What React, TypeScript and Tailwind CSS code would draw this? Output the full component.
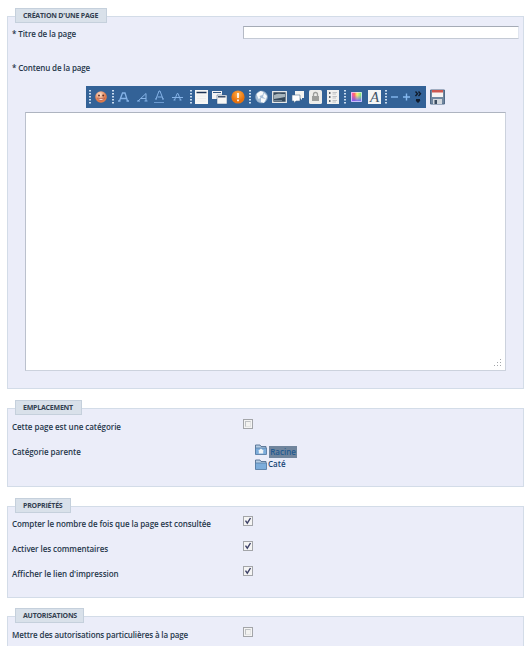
import React from "react";

type PanelProps = {
  title: string;
  titleClass: string;
  className: string;
  children: React.ReactNode;
};

function Panel({ title, titleClass, className, children }: PanelProps) {
  return (
    <section className={`w-[517px] border border-[#d3dce8] bg-[#ebedf9] ${className}`}>
      <h2
        className={`-mt-[9px] ml-[7px] flex h-[15px] items-center whitespace-nowrap border border-[#c5d0dc] bg-[#d9e1ea] pt-[1px] pl-[7px] text-[7px] font-bold tracking-[-0.22px] text-[#333f50] ${titleClass}`}
      >
        {title}
      </h2>
      {children}
    </section>
  );
}

function Check({ checked = false, label }: { checked?: boolean; label: string }) {
  return (
    <span
      role="checkbox"
      aria-checked={checked}
      aria-label={label}
      className="flex h-[10px] w-[10px] items-center justify-center border border-[#a3a5a9] bg-[#f4f4f4]"
    >
      {checked ? (
        <svg width="8" height="8" viewBox="0 0 8 8" fill="none" stroke="#3d4168" strokeWidth="1.4">
          <path d="M1.5 3.7 3.3 6.2 6.5 1" />
        </svg>
      ) : (
        <span className="h-[6px] w-[6px] border border-[#e3e4e4] border-t-[#bfc2c5] border-l-[#bfc2c5] bg-[#f3f3f1]" />
      )}
    </span>
  );
}

function Row({
  label,
  tracking,
  checked,
  className,
}: {
  label: string;
  tracking: string;
  checked?: boolean;
  className: string;
}) {
  return (
    <div className={`flex h-[12px] pl-[4px] ${className}`}>
      <span className={`w-[231px] whitespace-nowrap pt-[2px] leading-[12px] ${tracking}`}>{label}</span>
      <Check checked={checked} label={label} />
    </div>
  );
}

function Dots({ className }: { className: string }) {
  return (
    <svg className={`shrink-0 ${className}`} width="2" height="14" viewBox="0 0 2 14" fill="#c9dcef">
      {[0, 3, 6, 9, 12].map((y) => (
        <rect key={y} y={y} width="2" height="1.5" />
      ))}
    </svg>
  );
}

function Icon({ w, className = "", children }: { w: number; className?: string; children: React.ReactNode }) {
  return (
    <svg className={`shrink-0 ${className}`} width={w} height="16" viewBox={`0 0 ${w} 16`} fill="none">
      {children}
    </svg>
  );
}

function Toolbar() {
  return (
    <div className="mt-[12px] ml-[78px] flex h-[22px] items-center">
      <div className="flex h-[22px] w-[340px] shrink-0 items-center bg-[#336297]">
        <Dots className="ml-[3px]" />
        <Icon w={12} className="ml-[4px]">
          <defs>
            <radialGradient id="face" cx="40%" cy="30%">
              <stop stopColor="#ffe5cf" />
              <stop offset="1" stopColor="#dd7a4c" />
            </radialGradient>
            <radialGradient id="warn" cx="50%" cy="30%">
              <stop stopColor="#ffb04a" />
              <stop offset="1" stopColor="#e8720d" />
            </radialGradient>
            <linearGradient id="hues">
              <stop stopColor="#f05ade" />
              <stop offset=".3" stopColor="#ff6666" />
              <stop offset=".55" stopColor="#fff176" />
              <stop offset="1" stopColor="#54e878" />
            </linearGradient>
            <linearGradient id="cool" x1="0" y1="0" x2="0" y2="1">
              <stop offset=".3" stopColor="#6a5cff" stopOpacity="0" />
              <stop offset="1" stopColor="#6d5cff" />
            </linearGradient>
          </defs>
          <circle cx="6" cy="8" r="5.8" fill="url(#face)" />
          <circle cx="4" cy="6.5" r="1" fill="#633028" />
          <circle cx="8.2" cy="6.5" r="1" fill="#633028" />
          <path d="M2.5 9Q6 14 9.5 9Q6 10.5 2.5 9Z" fill="#fff" stroke="#a94832" strokeWidth=".7" />
        </Icon>
        <Dots className="ml-[5px]" />
        <Icon w={12} className="ml-[4px]">
          <path d="M1.5 12 4.500 4H7l2.500 8M3 9.500h5.500M0 12h2.500M8.500 12H11" stroke="#85b3e8" strokeWidth="1.3" />
        </Icon>
        <Icon w={12} className="ml-[7px]">
          <path d="M1 12 9 4.500V12M4 9.500h5M0 12h3M7.500 12h3" stroke="#85b3e8" strokeWidth="1" />
        </Icon>
        <Icon w={12} className="ml-[5px]">
          <path d="M2 10 5 2h1l3 8M3.500 8h4.500M1 10h2M8 10h2" stroke="#85b3e8" strokeWidth="1" />
          <path d="M0 13.500h10" stroke="#85b3e8" strokeWidth=".7" />
        </Icon>
        <Icon w={12} className="ml-[6px]">
          <path d="M2.500 11 5.200 4.500h.8L8.500 11M0 8.500h11M1.500 11h2M7.500 11h2" stroke="#85b3e8" strokeWidth="1" />
        </Icon>
        <Dots className="ml-[6px]" />
        <Icon w={13} className="ml-[3px]">
          <path d="M0 1h13v14H0z" fill="#f7f7f5" />
          <path d="M1.500 3.500h10" stroke="#1d3456" strokeWidth="1.5" />
          <path d="M2 7h9M2 9.500h9M2 12h9" stroke="#eceded" />
        </Icon>
        <Icon w={15} className="ml-[4px]">
          <path d="M0 2h10v8H0z" fill="#f2f3f4" />
          <path d="M1 3.500h8" stroke="#315783" />
          <path d="M5 6h10v9H5z" fill="#f7f7f5" stroke="#315783" strokeWidth=".5" />
          <path d="M6 7.800h7.500" stroke="#1d3456" strokeWidth="1.300" />
        </Icon>
        <Icon w={14} className="ml-[4px]">
          <circle cx="7" cy="8" r="6.600" fill="url(#warn)" />
          <path d="M7 4v5M7 10.500v1.700" stroke="#fff" strokeWidth="1.700" />
        </Icon>
        <Dots className="ml-[4px]" />
        <Icon w={13} className="ml-[4px]">
          <circle cx="6.500" cy="8" r="6" fill="#a9c0d8" stroke="#88a3bf" strokeWidth=".6" />
          <path d="m1.500 5 4-3 3 1-1 3-3 1 1 2-2 1ZM9 4l3 3-1 3-3-2ZM6 9l5 1-2 4-3-1Z" fill="#f8fafb" />
        </Icon>
        <Icon w={15} className="ml-[4px]">
          <path d="M.7 2.700h13.600v10.600H.7z" fill="#35495b" stroke="#e5e8e9" strokeWidth="1.300" />
          <path d="M2 8V6c4-2 7-1 11-1v3l-5 1-6 1Z" fill="#a4b3bb" />
          <path d="M2 11.500h8" stroke="#708394" />
        </Icon>
        <Icon w={14} className="ml-[4px]">
          <path d="M4 2h9v7h-2v2L9 9H4Z" fill="#f5f5f2" />
          <path d="M1 6h8v6H5l-2 2v-2H1Z" fill="#fff" stroke="#52718e" strokeWidth=".6" />
        </Icon>
        <Icon w={13} className="ml-[4px]">
          <rect y="1" width="13" height="14" rx="1.500" fill="#ededea" />
          <path d="M4.500 7V5.500a2 2 0 0 1 4 0V7" stroke="#9c9e9b" strokeWidth="1.300" />
          <path d="M3 7h7v5H3z" fill="#9c9e9b" />
        </Icon>
        <Icon w={12} className="ml-[5px]">
          <path d="M0 1h12v14H0z" fill="#f1f1ef" />
          <path d="M2 4h1.500M2 8h1.500M2 12h1.500" stroke="#303942" strokeWidth="1.5" />
          <path d="M5.500 3.500H10M5.500 5H9M5.500 7.500H10M5.500 9H9M5.500 11.500H10M5.500 13H9" stroke="#b6b9bb" strokeWidth=".8" />
        </Icon>
        <Dots className="ml-[5px]" />
        <Icon w={11} className="ml-[5px]">
          <path d="M0 3h11v10H0z" fill="url(#hues)" />
          <path d="M0 3h11v10H0z" fill="url(#cool)" />
          <path d="M.5 3.500h10v9H.5z" stroke="#eee6ff" strokeWidth=".7" />
        </Icon>
        <span className="ml-[6px] flex h-[14px] w-[13px] shrink-0 items-center justify-center bg-[#f4f5f5] font-['Liberation_Serif',serif] text-[15px] font-normal italic leading-none text-[#415467]">
          A
        </span>
        <Dots className="ml-[4px]" />
        <Icon w={9} className="ml-[3px]">
          <path d="M1 8h7" stroke="#86b9f0" strokeWidth="1.400" />
        </Icon>
        <Icon w={9} className="ml-[3px]">
          <path d="M1 8h7M4.500 4.500v7" stroke="#86b9f0" strokeWidth="1.400" />
        </Icon>
        <Icon w={7} className="ml-[4px]">
          <path d="m.5 2.500 2 2.300-2 2.300M3.500 2.500l2 2.300-2 2.300" stroke="#101b2b" strokeWidth="1.400" />
          <path d="M1 10h4v1.500h.5L3 14 .5 11.500H1Z" fill="#101b2b" />
        </Icon>
      </div>
      <Icon w={15} className="ml-[4px]">
        <path d="M.5 1h14v14H.5z" fill="#71879f" stroke="#516a87" />
        <path d="M2 1h11v7H2z" fill="#f7f4f2" />
        <path d="M2 1h11v2.500H2z" fill="#cc5850" />
        <path d="M3 10h9v5H3z" fill="#d3d8dd" />
        <path d="M4.500 11H7v4H4.500z" fill="#3a4c60" />
      </Icon>
    </div>
  );
}

function Folder({ root = false }: { root?: boolean }) {
  return (
    <svg width="12" height="11" viewBox="0 0 12 11" className="shrink-0">
      <path d="M.5 10V1h4.500l1 1.500h5V10Z" fill="#b5cde4" stroke="#516e91" strokeWidth=".9" />
      <path d="M.5 4h11v6.500H.5Z" fill="#7daddb" stroke="#567ba3" strokeWidth=".8" />
      {root && <path d="m6 4.500 3 2.500h-.8v2.500H3.800V7H3Z" fill="#f0f4f7" />}
    </svg>
  );
}

export default function App() {
  return (
    <main className="h-[651px] w-[529px] overflow-hidden bg-white pt-[16px] pl-[7px] font-['Open_Sans',sans-serif] text-[8px] font-semibold text-[#26374b]">
      <Panel title="CRÉATION D'UNE PAGE" titleClass="w-[92px]" className="h-[373px]">
        <div className="mt-[3px] flex h-[13px] pl-[4px]">
          <label htmlFor="titre" className="w-[231px] whitespace-nowrap pt-[2px] leading-[12px] tracking-[-0.1px]">
            * Titre de la page
          </label>
          <input
            id="titre"
            className="h-[13px] w-[276px] border border-[#e0e5ef] border-t-[#a5abb6] border-l-[#b5bac5] border-b-[#c4cad5] bg-white outline-none"
          />
        </div>
        <p className="mt-[23px] whitespace-nowrap pl-[4px] leading-[12px] tracking-[-0.14px]">* Contenu de la page</p>
        <Toolbar />
        <div className="mt-[4px] ml-[17px] flex h-[259px] w-[481px] items-end justify-end border border-[#ccd2dd] border-t-[#aeb4c0] border-l-[#bbc1cd] bg-white p-[3px]">
          <svg width="8" height="8" viewBox="0 0 8 8" fill="#a3a6aa">
            <path d="M6 0h1v1H6zM3 3h1v1H3zM6 3h1v1H6zM0 6h1v1H0zM3 6h1v1H3zM6 6h1v1H6z" />
          </svg>
        </div>
      </Panel>

      <Panel title="EMPLACEMENT" titleClass="w-[67px]" className="mt-[19px] h-[79px]">
        <Row label="Cette page est une catégorie" tracking="tracking-[-0.04px]" className="mt-[4px]" />
        <div className="mt-[13px] flex pl-[4px]">
          <span className="w-[243px] pt-[2px] leading-[12px] tracking-[-0.06px]">Catégorie parente</span>
          <div>
            <div className="flex h-[14px] items-start">
              <Folder root />
              <span className="mt-[2px] ml-[2px] flex h-[12px] w-[28px] items-center justify-center bg-[#70859d] text-[#22598f]">
                Racine
              </span>
            </div>
            <div className="flex h-[12px] items-center">
              <Folder />
              <span className="ml-[1px] leading-[10px] text-[#174575]">Caté</span>
            </div>
          </div>
        </div>
      </Panel>

      <Panel title="PROPRIÉTÉS" titleClass="w-[56px]" className="mt-[19px] h-[92px]">
        <Row
          label="Compter le nombre de fois que la page est consultée"
          tracking="tracking-[-0.08px]"
          checked
          className="mt-[3px]"
        />
        <Row label="Activer les commentaires" tracking="tracking-[-0.07px]" checked className="mt-[13px]" />
        <Row label="Afficher le lien d'impression" tracking="tracking-[-0.03px]" checked className="mt-[13px]" />
      </Panel>

      <Panel title="AUTORISATIONS" titleClass="w-[69px]" className="mt-[18px] h-[30px] border-b-0">
        <Row
          label="Mettre des autorisations particulières à la page"
          tracking="tracking-[-0.13px]"
          className="mt-[4px]"
        />
      </Panel>
    </main>
  );
}
